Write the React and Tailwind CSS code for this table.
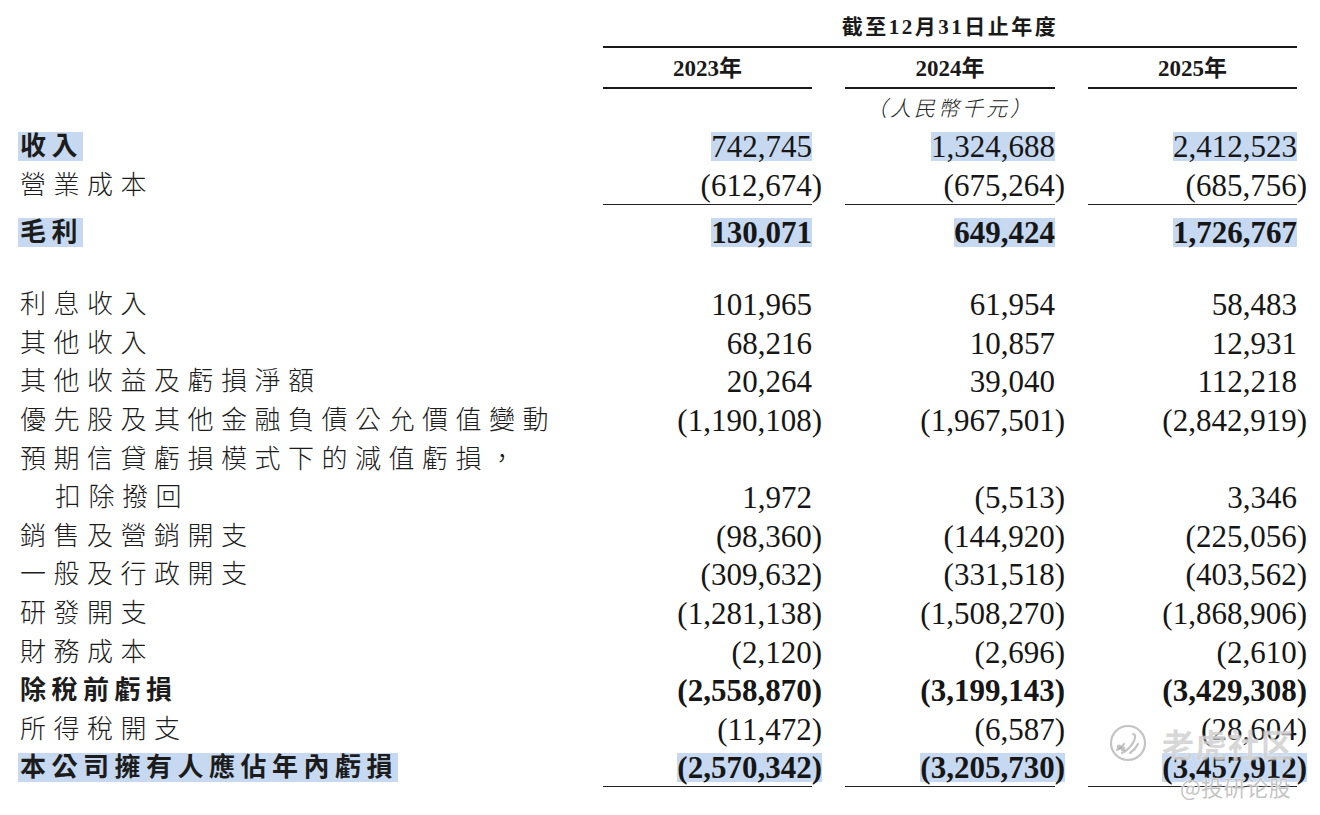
import React from "react";

const FONT = { fontFamily: '"Liberation Serif", "Noto Sans CJK TC", serif' };

const rows = [
  { label: "收入", bold: true, hl: true, numBold: false, v: ["742,745", "1,324,688", "2,412,523"] },
  { label: "營業成本", v: ["(612,674)", "(675,264)", "(685,756)"], line: true },
  { spacer: "h-[8px]" },
  { label: "毛利", bold: true, hl: true, v: ["130,071", "649,424", "1,726,767"] },
  { spacer: "h-[34px]" },
  { label: "利息收入", v: ["101,965", "61,954", "58,483"] },
  { label: "其他收入", v: ["68,216", "10,857", "12,931"] },
  { label: "其他收益及虧損淨額", v: ["20,264", "39,040", "112,218"] },
  { label: "優先股及其他金融負債公允價值變動", v: ["(1,190,108)", "(1,967,501)", "(2,842,919)"] },
  { label: "預期信貸虧損模式下的減值虧損，", v: ["", "", ""] },
  { label: "扣除撥回", indent: true, v: ["1,972", "(5,513)", "3,346"] },
  { label: "銷售及營銷開支", v: ["(98,360)", "(144,920)", "(225,056)"] },
  { label: "一般及行政開支", v: ["(309,632)", "(331,518)", "(403,562)"] },
  { label: "研發開支", v: ["(1,281,138)", "(1,508,270)", "(1,868,906)"] },
  { label: "財務成本", v: ["(2,120)", "(2,696)", "(2,610)"] },
  { label: "除稅前虧損", bold: true, v: ["(2,558,870)", "(3,199,143)", "(3,429,308)"] },
  { label: "所得稅開支", v: ["(11,472)", "(6,587)", "(28,604)"] },
  { label: "本公司擁有人應佔年內虧損", bold: true, hl: true, v: ["(2,570,342)", "(3,205,730)", "(3,457,912)"], bottom: true },
];

const colW = ["w-[209px]", "w-[210px] ml-[33px]", "w-[209px] ml-[33px]"];

function Num({ text, bold, hl }) {
  if (!text) return null;
  const neg = text.startsWith("(");
  return (
    <span
      className={
        "inline-block leading-[29px] text-[31px] text-[#161616] " +
        (bold ? "font-bold " : "font-normal ") +
        (hl ? "bg-[#c6d9f1] " : "") +
        (neg ? "mr-[-10px]" : "")
      }
    >
      {text}
    </span>
  );
}

function Row({ r }) {
  const numBold = r.numBold === undefined ? r.bold : r.numBold;
  return (
    <div className="flex h-[38.6px]">
      <div className={"w-[603px] flex items-center " + (r.indent ? "pl-[55px]" : "pl-[20px]")}>
        <span
          className={
            "inline-block leading-[29px] text-[26px] text-[#1c1c1c] pl-[2px] ml-[-2px] " +
            (r.bold ? "font-bold tracking-[5.5px] " : "font-light tracking-[7.5px] ") +
            (r.hl ? "bg-[#c6d9f1]" : "")
          }
        >
          {r.label}
        </span>
      </div>
      {r.v.map((t, i) => (
        <div
          key={i}
          className={
            colW[i] +
            " flex items-center justify-end " +
            (r.line ? "border-b border-[#222] " : "") +
            (r.bottom ? "border-b-[1.5px] border-[#222] " : "")
          }
        >
          <Num text={t} bold={numBold} hl={r.hl} />
        </div>
      ))}
    </div>
  );
}

function TigerIcon() {
  return (
    <svg width="40" height="40" viewBox="0 0 40 40" fill="none" stroke="rgba(170,170,170,0.7)" strokeWidth="2.2" strokeLinecap="round">
      <circle cx="20" cy="20" r="17" />
      <path d="M9 27c3-1 5-3 7-6" />
      <path d="M14 30c4-2 9-6 12-12 2-4 1-7-1-7" />
      <path d="M22 30c3-2 6-5 8-9" />
      <circle cx="11" cy="24" r="1.3" />
      <circle cx="15" cy="26" r="1.3" />
    </svg>
  );
}

export default function App() {
  return (
    <div className="w-[1320px] h-[815px] bg-white relative overflow-hidden" style={FONT}>
      {/* header title */}
      <div className="ml-[603px] w-[694px] h-[48px] pt-[10px] flex items-center justify-center border-b-2 border-[#1a1a1a]">
        <span className="text-[21px] font-bold tracking-[2.5px] text-[#1a1a1a]">截至12月31日止年度</span>
      </div>
      {/* years */}
      <div className="flex h-[41px]">
        <div className="w-[603px]" />
        {["2023年", "2024年", "2025年"].map((y, i) => (
          <div key={y} className={colW[i] + " flex items-center justify-center pt-[4px] border-b-2 border-[#1a1a1a]"}>
            <span className="text-[23px] font-bold text-[#1a1a1a]">{y}</span>
          </div>
        ))}
      </div>
      {/* unit */}
      <div className="ml-[603px] w-[694px] h-[38.7px] pt-[3px] flex items-center justify-center">
        <span className="text-[21px] italic font-light tracking-[3px] text-[#222]">（人民幣千元）</span>
      </div>
      {/* body */}
      {rows.map((r, i) =>
        r.spacer ? <div key={i} className={r.spacer} /> : <Row key={i} r={r} />
      )}

      {/* watermark */}
      <div className="absolute left-[1108px] top-[719px] flex items-center gap-[14px] pointer-events-none">
        <TigerIcon />
        <span
          className="text-[32px] font-bold tracking-[1px] text-[rgba(175,175,175,0.5)] [text-shadow:0_0_2px_rgba(255,255,255,0.9)]"
          style={{ fontFamily: '"Noto Sans CJK SC", sans-serif' }}
        >
          老虎社区
        </span>
      </div>
      <div
        className="absolute left-[1180px] top-[770px] text-[22px] tracking-[0.5px] text-[rgba(185,185,185,0.85)] [text-shadow:0_0_2px_#fff,0_0_1px_#fff] pointer-events-none"
        style={{ fontFamily: '"Noto Sans CJK SC", sans-serif' }}
      >
        @投研论股
      </div>
    </div>
  );
}
